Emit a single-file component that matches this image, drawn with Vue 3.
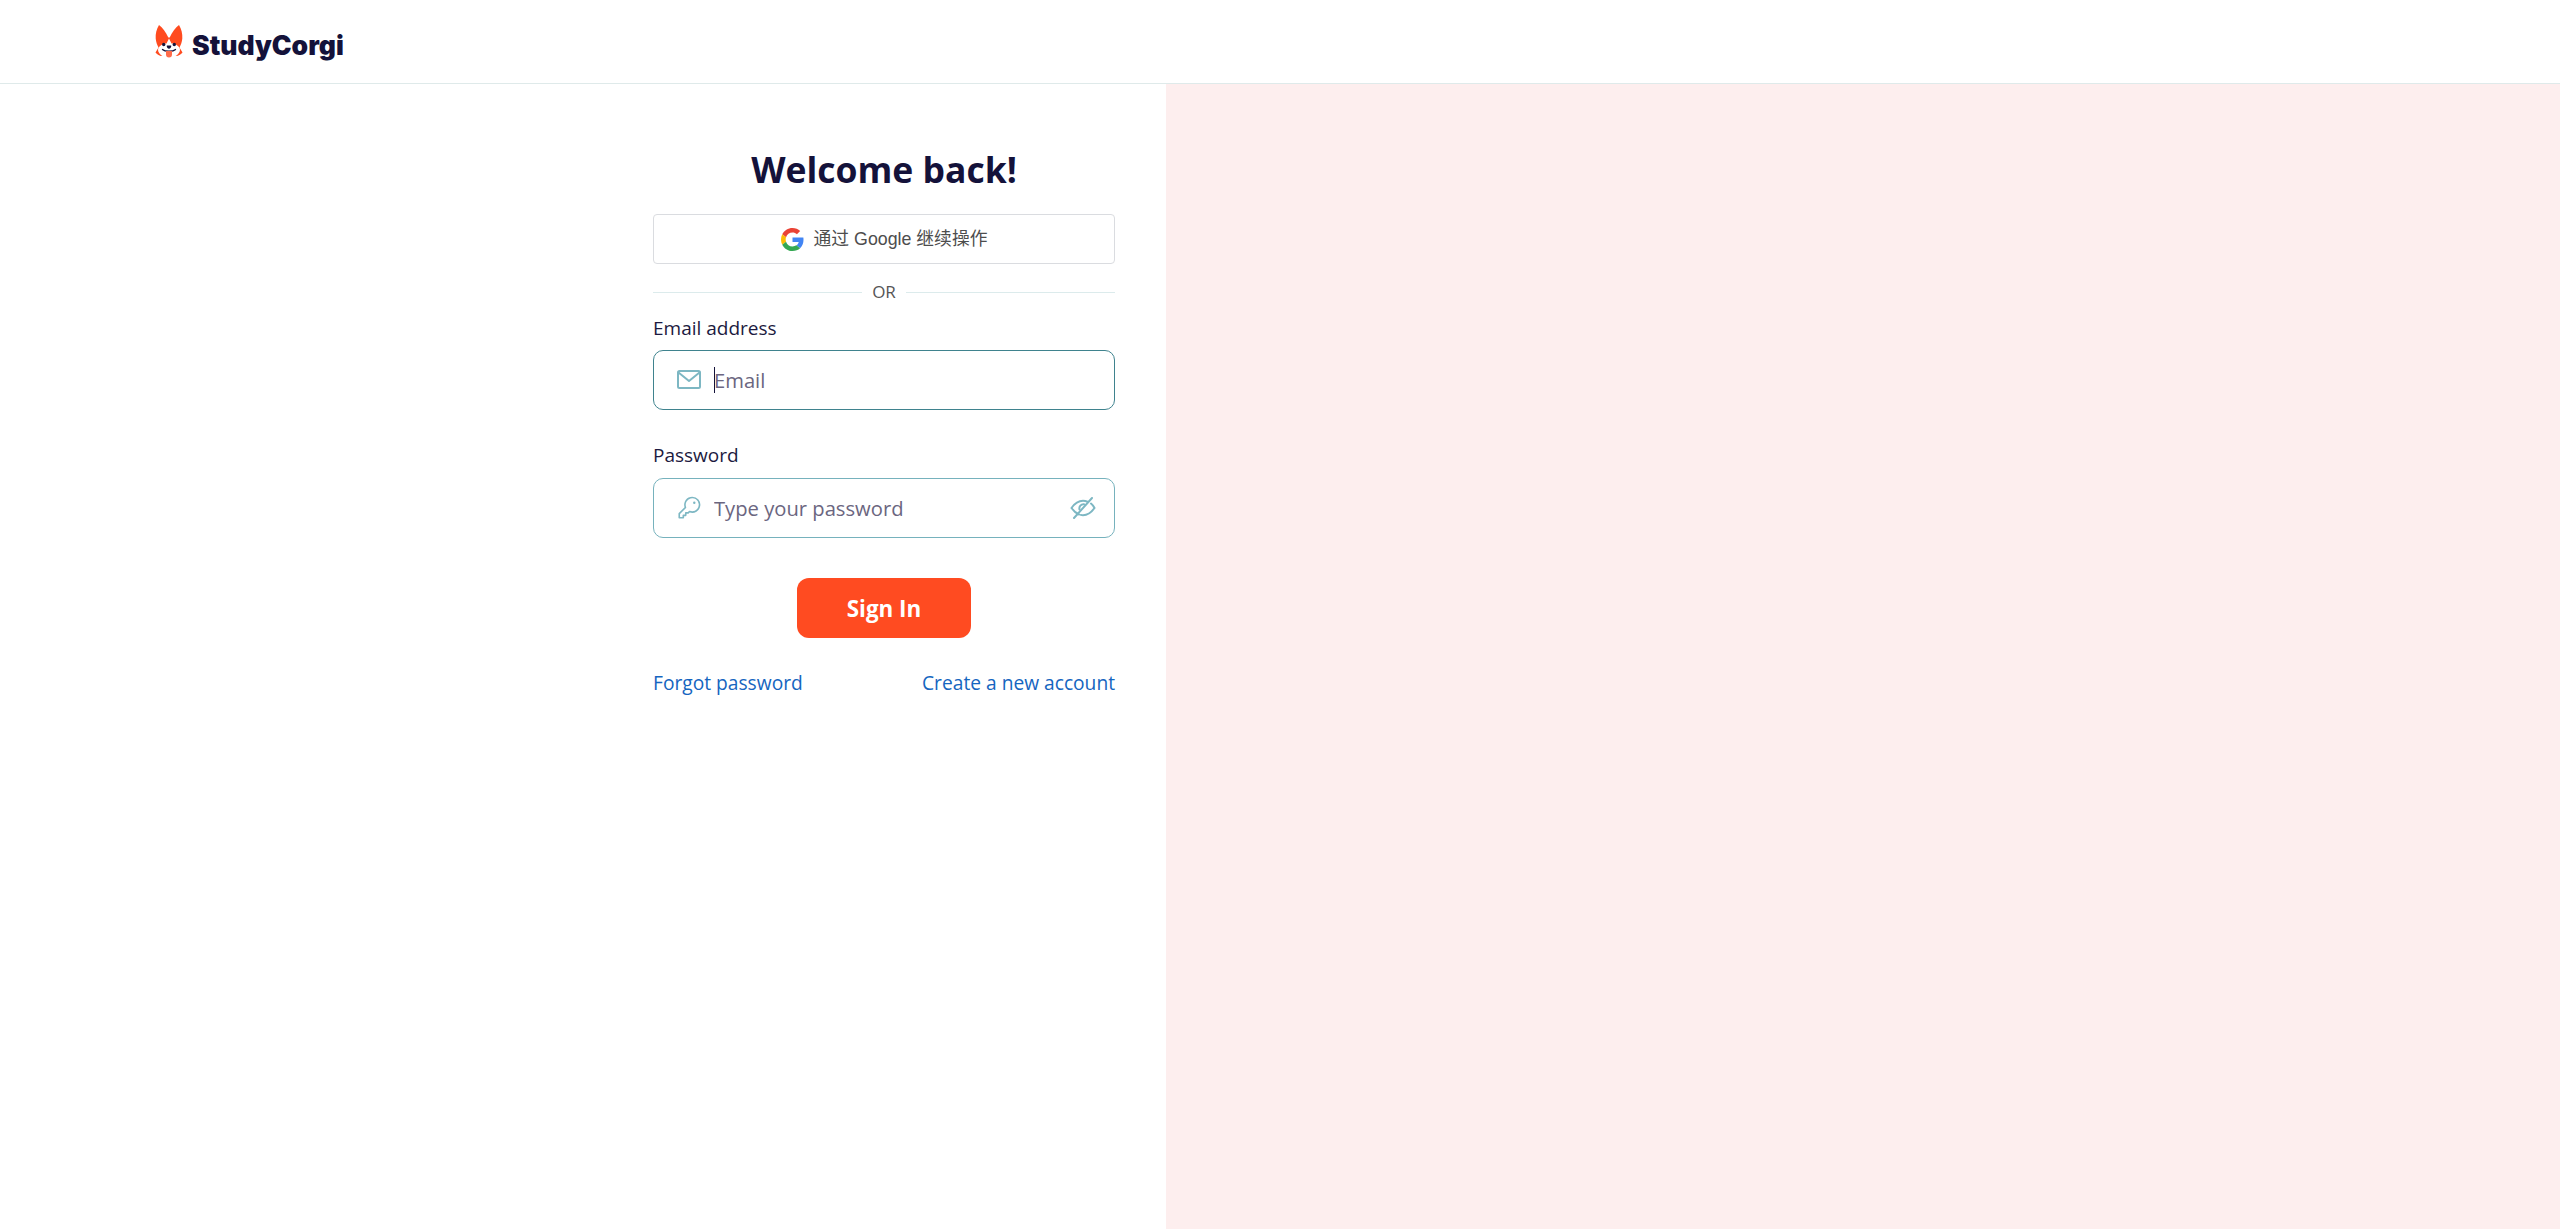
<script setup>
</script>

<template>
  <div class="page">
    <header class="top">
      <a class="brand" href="#">
        <svg class="logo" width="28" height="33" viewBox="0 0 28 33">
          <path fill="#ff4b1f" d="M4 0C7.500 2.500 11 7.500 13.300 12.500L14.700 12.500C17 7.500 20.500 2.500 24 0C26.500 4 27.600 9 27.300 13.500C27 17 25.800 20 24.500 22.500L27.500 27.500C26 29.500 24 30.500 22 31L6 31C4 30.500 2 29.500 0.500 27.500L3.500 22.500C2.200 20 1 17 0.700 13.500C0.400 9 1.500 4 4 0Z"/>
          <path fill="#fff" d="M14 13.500L16.500 18.500C18.500 18 21 19 23.500 21.500C25.500 23.500 25.500 26 23.500 28.500C21.500 31 18.500 32.500 14 32.500C9.500 32.500 6.500 31 4.500 28.500C2.500 26 2.500 23.500 4.500 21.500C7 19 9.500 18 11.500 18.500Z"/>
          <circle cx="8.700" cy="19.500" r="1.700" fill="#14123a"/>
          <circle cx="19.300" cy="19.500" r="1.700" fill="#14123a"/>
          <path fill="#14123a" d="M11.800 20.500h4.400c.4 1.500-1 3.200-2.200 3.200s-2.600-1.700-2.200-3.200Z"/>
          <path fill="none" stroke="#14123a" stroke-width="1.300" stroke-linecap="round" d="M7.500 24.500C10 26.800 18 26.800 20.500 24.500"/>
          <path fill="#ff6b4a" d="M11 26h6v3.500a3 3 0 0 1-6 0Z"/>
        </svg>
        <span class="brand-name">StudyCorgi</span>
      </a>
    </header>

    <main class="split">
      <section class="left">
        <form class="form" @submit.prevent>
          <h1 class="title">Welcome back!</h1>

          <button type="button" class="google">
            <svg width="23" height="23" viewBox="0 0 48 48">
              <path fill="#EA4335" d="M24 9.500c3.540 0 6.710 1.220 9.210 3.600l6.850-6.850C35.900 2.380 30.470 0 24 0 14.620 0 6.510 5.380 2.560 13.220l7.980 6.190C12.430 13.720 17.740 9.500 24 9.500z"/>
              <path fill="#4285F4" d="M46.980 24.550c0-1.570-.15-3.090-.38-4.550H24v9.020h12.940c-.58 2.960-2.260 5.480-4.780 7.180l7.730 6c4.510-4.180 7.090-10.360 7.090-17.650z"/>
              <path fill="#FBBC05" d="M10.530 28.590c-.48-1.450-.76-2.990-.76-4.590s.27-3.140.76-4.590l-7.980-6.190C.92 16.460 0 20.120 0 24c0 3.880.92 7.540 2.560 10.780l7.970-6.190z"/>
              <path fill="#34A853" d="M24 48c6.480 0 11.930-2.130 15.890-5.810l-7.730-6c-2.150 1.450-4.920 2.300-8.160 2.300-6.260 0-11.570-4.220-13.470-9.910l-7.980 6.190C6.510 42.620 14.620 48 24 48z"/>
            </svg>
            <span class="google-text">通过 Google 继续操作</span>
          </button>

          <div class="divider"><i></i><span>OR</span><i></i></div>

          <label class="label first">Email address</label>
          <div class="field focused">
            <svg class="icon" width="26" height="24" viewBox="0 0 26 24" fill="none" stroke="#7db7c3" stroke-width="2" stroke-linejoin="round" stroke-linecap="round">
              <rect x="2" y="3" width="22" height="17" rx="1.500"/>
              <path d="M2.500 4.500L13 13L23.500 4.500"/>
            </svg>
            <span class="control">
              <i class="caret"></i>
              <input class="input" type="email" placeholder="Email" />
            </span>
          </div>

          <label class="label second">Password</label>
          <div class="field">
            <svg class="icon" width="26" height="26" viewBox="0 0 256 256" fill="#7db7c3">
              <path d="M160,16A80.070,80.070,0,0,0,83.910,120.780L26.340,178.340A8,8,0,0,0,24,184v40a8,8,0,0,0,8,8H72a8,8,0,0,0,8-8V208H96a8,8,0,0,0,8-8V184h16a8,8,0,0,0,5.660-2.340l9.560-9.570A80,80,0,1,0,160,16Zm0,144a63.700,63.700,0,0,1-23.650-4.510,8,8,0,0,0-8.840,1.680L116.690,168H96a8,8,0,0,0-8,8v16H72a8,8,0,0,0-8,8v16H40V187.310l58.830-58.820a8,8,0,0,0,1.680-8.840A64,64,0,1,1,160,160Zm32-84a12,12,0,1,1-12-12A12,12,0,0,1,192,76Z"/>
            </svg>
            <span class="control">
              <input class="input" type="password" placeholder="Type your password" />
            </span>
            <svg class="eye" width="26" height="22" viewBox="0 0 26 22" fill="none" stroke="#7db7c3" stroke-width="2" stroke-linecap="round">
              <path d="M9 17.500C5.800 16 3.200 13.500 1.500 11C5 6 9 3.800 13 3.800C14.500 3.800 16 4.100 17.500 4.700"/>
              <path d="M21 6.500C22.500 7.700 23.600 9.300 24.500 11C21 16 17 18.200 13 18.200C12.300 18.200 11.500 18.100 10.800 17.900"/>
              <path d="M9.500 12.500C8.800 9.500 11 7 14 7.300"/>
              <path d="M22 1L4 21"/>
            </svg>
          </div>

          <button type="submit" class="submit">Sign In</button>

          <div class="links">
            <a href="#">Forgot password</a>
            <a href="#">Create a new account</a>
          </div>
        </form>
      </section>
      <aside class="right"></aside>
    </main>
  </div>
</template>

<style>
html, body { margin: 0; background: #fff; }
</style>

<style scoped>
.page {
  height: 1229px;
  display: flex;
  flex-direction: column;
  font-family: "Open Sans", "Noto Sans", "Noto Sans CJK SC", sans-serif;
  color: #14123a;
  overflow: hidden;
}
.top {
  height: 83px;
  flex: none;
  box-sizing: content-box;
  border-bottom: 1px solid #dfeaea;
  display: flex;
  align-items: center;
  padding-left: 155px;
}
.brand {
  display: flex;
  align-items: center;
  gap: 9px;
  text-decoration: none;
}
.logo { display: block; }
.brand-name {
  font-family: Inter, sans-serif;
  font-weight: 900;
  font-size: 26.500px;
  line-height: 34px;
  color: #14123a;
  margin-top: 7px;
}
.split {
  flex: 1;
  display: flex;
}
.left {
  width: 1166px;
  flex: none;
  display: flex;
  justify-content: flex-end;
  padding-right: 51px;
  box-sizing: border-box;
}
.right {
  flex: 1;
  background: #fdeeee;
}
.form {
  width: 462px;
  display: flex;
  flex-direction: column;
}
.title {
  margin: 62px 0 0;
  font-size: 35.500px;
  line-height: 46px;
  font-weight: 700;
  text-align: center;
  color: #14123a;
}
.google {
  margin-top: 22px;
  height: 50px;
  box-sizing: border-box;
  border: 1px solid #dadce0;
  border-radius: 4px;
  background: #fff;
  display: flex;
  align-items: center;
  justify-content: center;
  gap: 10px;
  font-family: "Liberation Sans", "Noto Sans CJK SC", sans-serif;
  font-size: 17.800px;
  color: #4d4d4d;
  padding: 0;
}
.google-text { margin-top: -5px; }
.divider {
  margin-top: 17px;
  display: flex;
  align-items: center;
  font-size: 17px;
  line-height: 22px;
  color: #555;
}
.divider i {
  flex: 1;
  height: 1px;
  background: #dcebec;
}
.divider span { width: 44px; text-align: center; }
.label {
  font-size: 19px;
  line-height: 24px;
  color: #1c1a40;
}
.label.first { margin-top: 13px; margin-bottom: 10px; }
.label.second { margin-top: 33px; margin-bottom: 11px; }
.field {
  height: 60px;
  box-sizing: border-box;
  border: 1px solid #76b2bd;
  border-radius: 10px;
  display: flex;
  align-items: center;
  padding: 0 18px 0 22px;
  gap: 12px;
}
.field.focused { border-color: #3f838e; }
.icon, .eye { flex: none; display: block; }
.control {
  position: relative;
  flex: 1;
  min-width: 0;
  display: flex;
}
.caret {
  position: absolute;
  left: 0;
  top: 3px;
  width: 1px;
  height: 26px;
  background: #14123a;
}
.input {
  flex: 1;
  min-width: 0;
  border: 0;
  outline: 0;
  padding: 0;
  background: transparent;
  font-family: "Open Sans", sans-serif;
  font-size: 20.200px;
  line-height: 32px;
  color: #14123a;
}
.input::placeholder { color: #6b6680; opacity: 1; }
.submit {
  align-self: center;
  margin-top: 40px;
  width: 174px;
  height: 60px;
  border: 0;
  border-radius: 12px;
  background: #ff4b21;
  color: #fff;
  font-family: "Open Sans", sans-serif;
  font-weight: 700;
  font-size: 22.400px;
}
.links {
  margin-top: 33px;
  display: flex;
  justify-content: space-between;
  font-size: 19.200px;
  line-height: 24px;
}
.links a { color: #1565c0; text-decoration: none; }
</style>
